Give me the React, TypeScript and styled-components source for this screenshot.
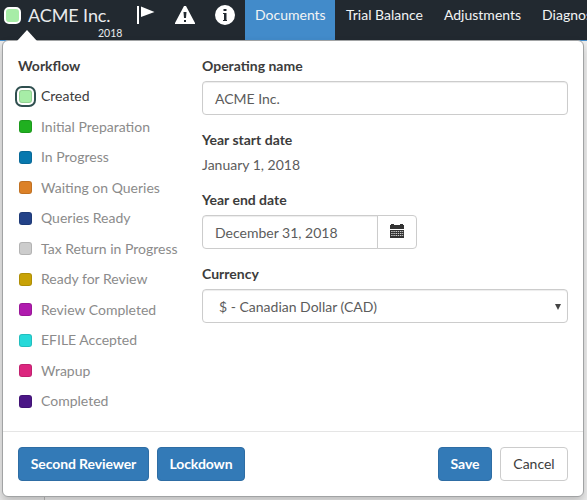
import React from "react";
import styled, { createGlobalStyle, css } from "styled-components";

const GlobalStyle = createGlobalStyle`
  * { box-sizing: border-box; }
  body {
    margin: 0;
    overflow: hidden;
    background: #e9e9e9;
    color: #3c3c3c;
    font: 400 14px/20px Lato, "Liberation Sans", sans-serif;
  }
`;

const Page = styled.div`
  position: relative;
  width: 587px;
  height: 500px;
  overflow: hidden;
  display: flex;
  flex-direction: column;
`;

const NavBar = styled.nav`
  display: flex;
  flex: none;
  width: 640px;
  height: 40px;
  background: #222930;
  color: #e9ebec;
`;

const Entity = styled.div`
  display: grid;
  grid-template-columns: 17px auto;
  column-gap: 7px;
  align-content: start;
  width: 125px;
  padding: 4px 0 0 4px;
`;

const EntitySwatch = styled.span`
  width: 17px;
  height: 17px;
  margin-top: 3px;
  border: 2px solid #fff;
  border-radius: 5px;
  background: #a7eda7;
`;

const EntityName = styled.span`
  font-size: 18px;
  line-height: 23px;
  letter-spacing: -0.1px;
  white-space: nowrap;
`;

const EntityYear = styled.span`
  grid-column: 2;
  padding-left: 70px;
  font-size: 10.5px;
  line-height: 12px;
`;

const NavIcons = styled.div`
  display: flex;
  width: 120px;
  padding: 5px 0 0 11px;
`;

const NavIcon = styled.svg<{ $gap: number }>`
  display: block;
  width: 20px;
  height: 20px;
  margin-right: ${(p) => p.$gap}px;
  fill: #fff;
`;

const NavTab = styled.a<{ $active?: boolean }>`
  height: 40px;
  padding: 5px ${(p) => (p.$active ? "0 0 10px" : "10px 0 11px")};
  width: ${(p) => (p.$active ? "90px" : "auto")};
  flex: none;
  color: #f2f4f5;
  background: ${(p) => (p.$active ? "#428bca" : "transparent")};
  white-space: nowrap;
`;

const Backdrop = styled.div`
  flex: 1;
  border-top: 1px solid #428bca;
  background: #eee;
`;

const BackdropColumn = styled.div`
  width: 45px;
  height: 100%;
  border-right: 1px solid #bbb;
  background: #e9e9e9;
`;

const Popover = styled.section`
  position: absolute;
  left: 2px;
  top: 40px;
  width: 582px;
  height: 457px;
  display: flex;
  flex-direction: column;
  border: 1px solid #a1a3a4;
  border-radius: 6px;
  background: #fff;
  box-shadow: 0 5px 10px rgba(0, 0, 0, 0.2);
`;

const Pointer = styled.span`
  position: absolute;
  left: 14px;
  top: -11px;
  border: 10px solid transparent;
  border-top: 0;
  border-bottom: 11px solid #fff;
`;

const Content = styled.div`
  display: grid;
  grid-template-columns: 184px 366px;
  height: 390px;
  padding: 15px 15px 0;
`;

const Heading = styled.div`
  font-weight: 700;
  line-height: 20px;
`;

const Workflow = styled.ul`
  list-style: none;
  margin: 5px 0 0;
  padding: 0;
`;

const Stage = styled.li<{ $current?: boolean }>`
  display: flex;
  align-items: center;
  gap: 9px;
  height: 30.5px;
  padding-left: 1px;
  color: ${(p) => (p.$current ? "#3c3c3c" : "#8b8b8b")};
  white-space: nowrap;
`;

const Swatch = styled.span<{ $color: string; $current?: boolean }>`
  width: 13px;
  height: 13px;
  border: 1px solid rgba(0, 0, 0, 0.12);
  border-radius: 3px;
  background: ${(p) => p.$color};
  ${(p) =>
    p.$current &&
    css`
      box-shadow: 0 0 0 2px #fff, 0 0 0 4px #2f4f4f;
    `}
`;

const Fields = styled.div`
  display: flex;
  flex-direction: column;
`;

const Field = styled.div<{ $height: number }>`
  height: ${(p) => p.$height}px;
`;

const Control = styled.div<{ $inset?: number }>`
  display: flex;
  align-items: center;
  justify-content: space-between;
  height: 34px;
  margin-top: 5px;
  padding: 2px 6px 0 ${(p) => p.$inset ?? 12}px;
  border: 1px solid #ccc;
  border-radius: 4px;
  box-shadow: inset 0 1px 1px rgba(0, 0, 0, 0.075);
  color: #5c5c5c;
`;

const StaticValue = styled.div`
  margin-top: 5px;
  color: #5c5c5c;
`;

const DateGroup = styled.div`
  display: flex;
  width: 215px;

  ${Control} {
    width: 176px;
    border-radius: 4px 0 0 4px;
  }
`;

const CalendarButton = styled.span`
  display: flex;
  justify-content: center;
  width: 40px;
  height: 34px;
  margin: 5px 0 0 -1px;
  padding-top: 8px;
  border: 1px solid #ccc;
  border-radius: 0 4px 4px 0;
  flex: none;
`;

const Footer = styled.footer`
  display: flex;
  gap: 8px;
  flex: 1;
  padding: 15px 15px 0;
  border-top: 1px solid #e5e5e5;
`;

const Button = styled.button<{ $width: number; $plain?: boolean; $push?: boolean }>`
  width: ${(p) => p.$width}px;
  height: 34px;
  margin-left: ${(p) => (p.$push ? "auto" : 0)};
  padding: 0;
  border: 1px solid ${(p) => (p.$plain ? "#ccc" : "#2e6da4")};
  border-radius: 4px;
  background: ${(p) => (p.$plain ? "#fff" : "#337ab7")};
  color: ${(p) => (p.$plain ? "#3c3c3c" : "#fff")};
  font: ${(p) => (p.$plain ? 400 : 700)} 14px/20px Lato, sans-serif;
  letter-spacing: ${(p) => (p.$plain ? 0 : "-0.1px")};
  white-space: nowrap;
`;

const stages = [
  ["Created", "#a7eda7"],
  ["Initial Preparation", "#20b020"],
  ["In Progress", "#0878ae"],
  ["Waiting on Queries", "#dc8127"],
  ["Queries Ready", "#234288"],
  ["Tax Return in Progress", "#cccccc"],
  ["Ready for Review", "#c8a206"],
  ["Review Completed", "#b01bae"],
  ["EFILE Accepted", "#27d9d9"],
  ["Wrapup", "#dc267f"],
  ["Completed", "#4b1686"],
];

export default function App() {
  return (
    <Page>
      <GlobalStyle />
      <NavBar>
        <Entity>
          <EntitySwatch />
          <EntityName>ACME Inc.</EntityName>
          <EntityYear>2018</EntityYear>
        </Entity>
        <NavIcons>
          <NavIcon $gap={19} viewBox="0 0 20 20">
            <path d="M1 1h2v18H1zM5 1.5L18.5 7 5 12z" />
          </NavIcon>
          <NavIcon $gap={20} viewBox="0 0 20 20">
            <path
              fillRule="evenodd"
              d="M9 1h2l9 17v1H0v-1zM8.5 7l.5 6h2l.5-6zM9 15v2h2v-2z"
            />
          </NavIcon>
          <NavIcon $gap={0} viewBox="0 0 20 20">
            <path
              fillRule="evenodd"
              d="M10 0a10 10 0 1 0 0 20 10 10 0 0 0 0-20zM8.5 4h3v2h-3zM8 8h3.5v7H12v1H8v-1h1V9H8z"
            />
          </NavIcon>
        </NavIcons>
        <NavTab $active>Documents</NavTab>
        <NavTab>Trial Balance</NavTab>
        <NavTab>Adjustments</NavTab>
        <NavTab>Diagnostics</NavTab>
      </NavBar>
      <Backdrop>
        <BackdropColumn />
      </Backdrop>
      <Popover>
        <Pointer />
        <Content>
          <div>
            <Heading>Workflow</Heading>
            <Workflow>
              {stages.map(([name, color], i) => (
                <Stage key={name} $current={i === 0}>
                  <Swatch $color={color} $current={i === 0} />
                  {name}
                </Stage>
              ))}
            </Workflow>
          </div>
          <Fields>
            <Field $height={74}>
              <Heading>Operating name</Heading>
              <Control>ACME Inc.</Control>
            </Field>
            <Field $height={60}>
              <Heading>Year start date</Heading>
              <StaticValue>January 1, 2018</StaticValue>
            </Field>
            <Field $height={74}>
              <Heading>Year end date</Heading>
              <DateGroup>
                <Control>December 31, 2018</Control>
                <CalendarButton>
                  <svg width="14" height="14" viewBox="0 0 14 14">
                    <path fill="#333" d="M0 1h1V0h3v1h6V0h3v1h1v4H0zM0 6h14v8H0z" />
                    <path
                      stroke="#fff"
                      strokeOpacity=".75"
                      strokeWidth="1"
                      strokeDasharray="1.4 .8"
                      d="M1.2 7.5h12M1.2 9.5h12M1.2 11.5h12"
                    />
                  </svg>
                </CalendarButton>
              </DateGroup>
            </Field>
            <Field $height={60}>
              <Heading>Currency</Heading>
              <Control $inset={16}>
                $ - Canadian Dollar (CAD)
                <svg width="6" height="6" viewBox="0 0 6 6">
                  <path fill="#444" d="M0 0h6L3 6z" />
                </svg>
              </Control>
            </Field>
          </Fields>
        </Content>
        <Footer>
          <Button $width={131}>Second Reviewer</Button>
          <Button $width={88}>Lockdown</Button>
          <Button $width={54} $push>Save</Button>
          <Button $width={68} $plain>Cancel</Button>
        </Footer>
      </Popover>
    </Page>
  );
}
